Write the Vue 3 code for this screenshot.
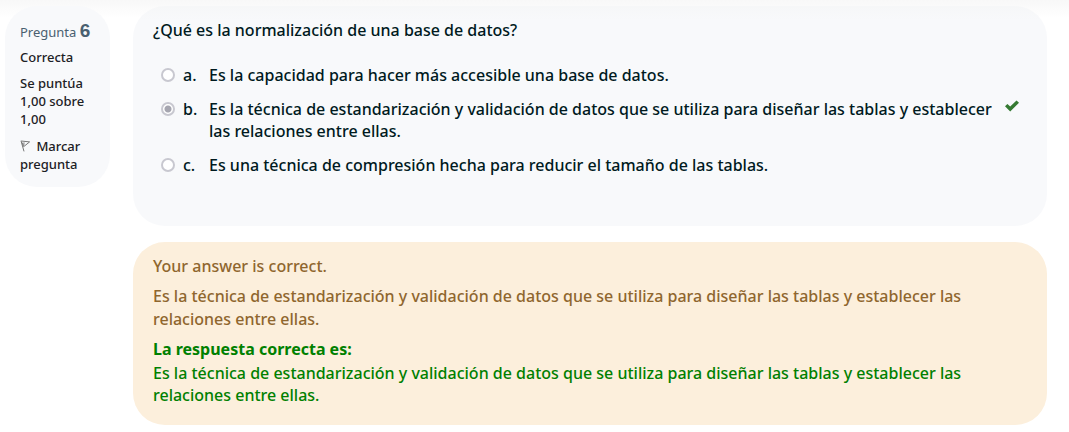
<script setup>
import { ref } from 'vue'

const selected = ref('b')
const answers = [
  { key: 'a', text: 'Es la capacidad para hacer más accesible una base de datos.' },
  {
    key: 'b',
    text: 'Es la técnica de estandarización y validación de datos que se utiliza para diseñar las tablas y establecer las relaciones entre ellas.',
    correct: true,
  },
  { key: 'c', text: 'Es una técnica de compresión hecha para reducir el tamaño de las tablas.' },
]
const solution =
  'Es la técnica de estandarización y validación de datos que se utiliza para diseñar las tablas y establecer las relaciones entre ellas.'
</script>

<template>
  <main class="page">
    <aside class="info">
      <h3 class="number">Pregunta <span class="digit">6</span></h3>
      <div class="state">Correcta</div>
      <div class="grade">Se puntúa 1,00 sobre 1,00</div>
      <button type="button" class="flag">
        <svg class="flag-icon" viewBox="0 0 12 12" aria-hidden="true">
          <path d="M1 .8 4 11.4M1.2 1 9.6 1.9 4 6.4 3 5.6M2 2.4 3.4 6.4M4 2.4 3.8 5.2" />
        </svg>
        Marcar pregunta
      </button>
    </aside>

    <div class="content">
      <section class="question">
        <p id="question-text" class="prompt">¿Qué es la normalización de una base de datos?</p>
        <div class="answers" role="radiogroup" aria-labelledby="question-text">
          <div v-for="answer in answers" :key="answer.key" class="answer">
            <input
              :id="`answer-${answer.key}`"
              v-model="selected"
              class="radio"
              type="radio"
              name="answer"
              :value="answer.key"
              disabled
            />
            <label class="label" :for="`answer-${answer.key}`">
              <span class="letter">{{ answer.key }}.</span>
              <span class="text">{{ answer.text }}</span>
            </label>
            <svg v-if="answer.correct" class="check" viewBox="0 0 14 12" role="img" aria-label="Correcta">
              <path d="M0 6.3 2.4 3.9 5.2 6.6 11.5.4 14 2.8 5.2 11.6Z" />
            </svg>
          </div>
        </div>
      </section>

      <section class="feedback">
        <p class="result">Your answer is correct.</p>
        <p class="general">{{ solution }}</p>
        <div class="right-answer">
          <strong class="right-title">La respuesta correcta es:</strong>
          <p class="right-text">{{ solution }}</p>
        </div>
      </section>
    </div>
  </main>
</template>

<style>
body {
  margin: 0;
  background: #fff linear-gradient(#f8f8f8, #fff) no-repeat 0 0 / 100% 18px;
}
</style>

<style scoped>
.page {
  display: flex;
  align-items: flex-start;
  gap: 23px;
  padding: 6px 22px 0 5px;
  font-family: "Noto Sans", sans-serif;
  font-size: 16px;
  font-weight: 500;
  line-height: 22px;
  color: #001a1e;
}
p,
h3 {
  margin: 0;
}
.info {
  box-sizing: border-box;
  flex: 0 0 105px;
  padding: 14px 15px;
  border-radius: 32px;
  background: #f8f9fb;
  color: #1d2125;
  font-size: 13px;
  line-height: 18px;
}
.number {
  margin-bottom: 5px;
  color: #4a6070;
  font-size: 13px;
  font-weight: 400;
  line-height: 22px;
  white-space: nowrap;
}
.digit {
  font-family: "Liberation Sans", sans-serif;
  font-size: 19px;
  font-weight: 700;
}
.state {
  margin-bottom: 8px;
}
.grade {
  margin-bottom: 9px;
}
.flag {
  display: block;
  padding: 0;
  border: 0;
  background: none;
  color: inherit;
  font: inherit;
  text-align: left;
}
.flag-icon {
  width: 12px;
  height: 12px;
  margin-right: 1px;
  vertical-align: -1px;
  fill: none;
  stroke: #777;
}
.content {
  flex: 1;
  min-width: 0;
}
.question {
  padding: 13px 28px 50px 20px;
  border-radius: 32px;
  background: linear-gradient(#f6f7f8, #f8f9fb 14px);
}
.answers {
  display: grid;
  gap: 12px;
  margin: 23px 0 0 8px;
}
.answer {
  display: flex;
  align-items: flex-start;
}
.radio {
  appearance: none;
  box-sizing: border-box;
  flex: none;
  width: 14px;
  height: 14px;
  margin: 4px 8px 0 0;
  border: 2px solid #c8c8d0;
  border-radius: 50%;
  background: #fff;
}
.radio:checked {
  background: radial-gradient(circle, #a6a6b0 3px, #fff 4px);
}
.label {
  display: flex;
  flex: 1;
}
.letter {
  flex: 0 0 26px;
}
.check {
  flex: none;
  width: 14px;
  height: 12px;
  margin: 2px 0 0 9px;
  fill: #357a32;
}
.feedback {
  margin-top: 16px;
  padding: 13px 60px 19px 20px;
  border-radius: 32px;
  background: #fcefdc;
  color: #8f662e;
}
.general {
  margin: 8px 0 7px;
  line-height: 23px;
}
.right-answer {
  color: #008000;
}
.right-title {
  display: block;
  margin-bottom: 2px;
  font-weight: 700;
}
</style>
